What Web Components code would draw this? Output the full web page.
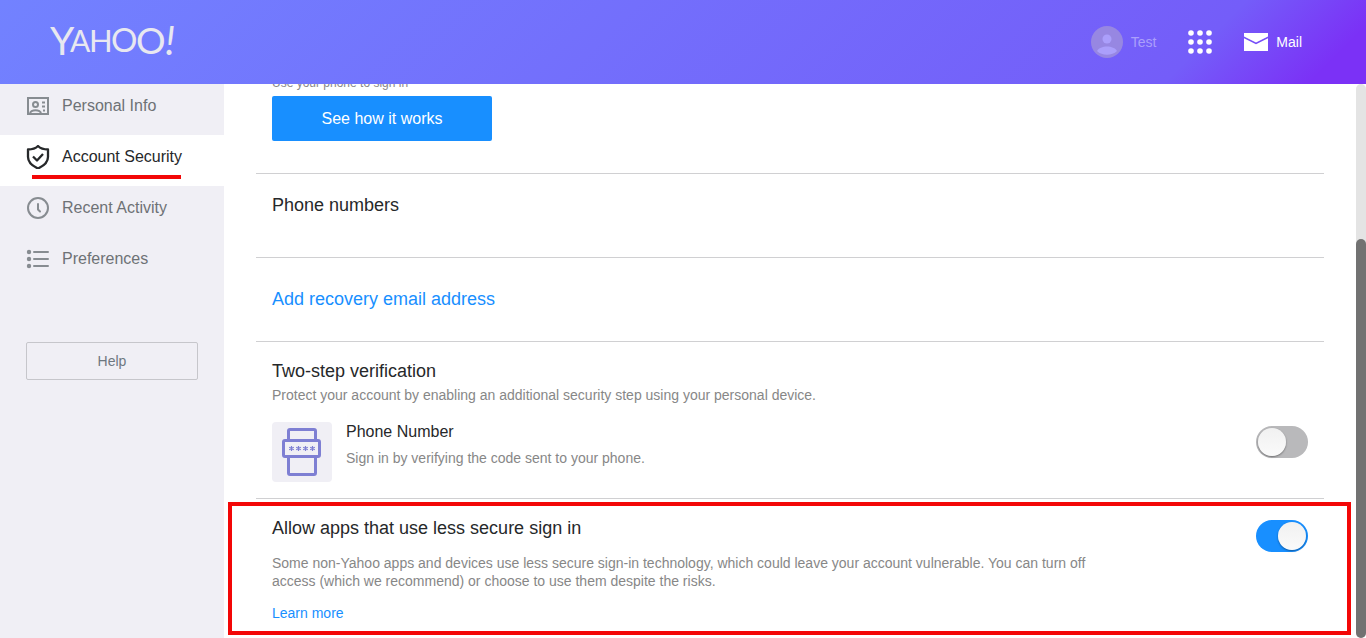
<!DOCTYPE html>
<html lang="en">
<head>
<meta charset="utf-8">
<title>Account Security</title>
<style>
  html, body { margin: 0; height: 100%; }
  body {
    font-family: "Liberation Sans", Arial, sans-serif;
    font-size: 14px;
    color: #26282a;
    background: #fff;
    overflow: hidden;
    --blue: #188fff;
    --muted: #878787;
    --panel: #f0eff5;
    --line: #d0d0d2;
    --mark: #f30707;
  }
</style>
</head>
<body>
<account-page>
  <top-bar slot="header" user="Test"></top-bar>
  <side-nav slot="nav">
    <nav-item icon="card">Personal Info</nav-item>
    <nav-item icon="shield" active>Account Security</nav-item>
    <nav-item icon="clock">Recent Activity</nav-item>
    <nav-item icon="list">Preferences</nav-item>
  </side-nav>
  <key-section>Use your phone to sign in</key-section>
  <plain-section>Phone numbers</plain-section>
  <plain-section link>Add recovery email address</plain-section>
  <verify-section></verify-section>
  <apps-section></apps-section>
</account-page>

<script>
const define = (name, render) => customElements.define(name, class extends HTMLElement {
  constructor() {
    super();
    this.attachShadow({ mode: 'open' });
  }
  connectedCallback() {
    const t = document.createElement('template');
    t.innerHTML = '<style>*{box-sizing:border-box}h2,h3,p{margin:0;font-weight:400}a{color:var(--blue);text-decoration:none}</style>' + render(this);
    this.shadowRoot.replaceChildren(t.content.cloneNode(true));
  }
});

/* Settings card shared styles */
const sectionCss = `
  :host { display: block; padding: 0 16px; border-bottom: 1px solid var(--line); }
  h2 { font-size: 18px; line-height: 24px; }
  p { font-size: 14px; line-height: 18px; color: var(--muted); }`;

const switchCss = `
  input {
    appearance: none; flex: none; margin: 4px 0 0; width: 52px; height: 32px;
    border-radius: 16px; background: #b9b9bb; display: flex; align-items: center; padding: 0 2px;
  }
  input::before {
    content: ""; width: 28px; height: 28px; border-radius: 50%;
    background: linear-gradient(#f1f1f1, #fafafa); box-shadow: 0 1px 2px rgba(0,0,0,.4);
  }
  input:checked { background: var(--blue); justify-content: flex-end; }`;

const icons = {
  card: `<g fill="none" stroke="#878c91" stroke-width="2"><path d="M2 4h20v16H2z"/><circle cx="9.500" cy="10.500" r="2.500"/><path d="M4 20c0-5 11-5 11 0M16 8.500h3M16 12.500h3M17 16.500h2"/></g>`,
  shield: `<g fill="none" stroke="#26282a" stroke-width="2.300" stroke-linejoin="round"><path d="M12 1C9.500 3.500 6 4.500 2 4.500V12c0 5 4.500 9 10 11.500C17.500 21 22 17 22 12V4.500C18 4.500 14.500 3.500 12 1z"/><path d="M7 11.500l4 4 6-6.500"/></g>`,
  clock: `<g fill="none" stroke="#878c91" stroke-width="2"><circle cx="12" cy="12" r="10"/><path d="M12 8v5.500l2 2" stroke-linecap="round" stroke-linejoin="round"/></g>`,
  list: `<g fill="#878c91"><circle cx="3" cy="5" r="2.200"/><circle cx="3" cy="12" r="2.200"/><circle cx="3" cy="19" r="2.200"/></g><path d="M8 5h14M8 12h14M8 19h14" stroke="#878c91" stroke-width="2" stroke-linecap="round"/>`
};

define('account-page', () => `
  <style>
    :host { display: flex; flex-direction: column; height: 100vh; }
    .body { flex: 1; min-height: 0; display: flex; }
    main { flex: 1; min-width: 0; overflow: hidden; }
    .scrolled { margin: -9px 32px 0; }
  </style>
  <slot name="header"></slot>
  <div class="body">
    <slot name="nav"></slot>
    <main><div class="scrolled"><slot></slot></div></main>
    <scroll-track></scroll-track>
  </div>`);

define('scroll-track', () => `
  <style>
    :host { display: flex; align-items: flex-end; flex: none; width: 10px; background: #e4e4e4; border-radius: 5px; }
    div { width: 100%; height: 72%; border-radius: 5px; background: #727272; }
  </style><div></div>`);

define('yahoo-logo', () => `
  <style>
    :host { display: block; }
    svg { display: block; }
    text { font-family: Lato, sans-serif; fill: #e8e8f0; }
  </style>
  <svg width="140" height="64" viewBox="0 0 140 64" role="img" aria-label="Yahoo!">
    <text><tspan x="0" y="45" font-size="39">Y</tspan><tspan x="20" y="42" font-size="30">A</tspan><tspan x="39" y="42" font-size="31">H</tspan><tspan x="61" y="42" font-size="33">O</tspan><tspan x="86" y="44" font-size="37">O</tspan><tspan x="115" y="45" font-size="40" font-style="italic">!</tspan></text>
  </svg>`);

define('top-bar', el => `
  <style>
    :host {
      display: flex; align-items: center; flex: none; height: 84px; padding: 0 64px 0 50px; gap: 32px;
      color: #fff; box-sizing: border-box;
      background: linear-gradient(135deg, #7282ff 0%, #745df9 86%, #7b31f6 96%);
    }
    yahoo-logo { margin-right: auto; }
    .item { display: flex; align-items: center; gap: 8px; color: inherit; }
    .user { color: #ab9ffb; }
    button { border: 0; padding: 0; background: none; font: inherit; }
    svg { display: block; }
  </style>
  <yahoo-logo></yahoo-logo>
  <button class="item user">
    <svg width="32" height="32" viewBox="0 0 32 32"><circle cx="16" cy="16" r="16" fill="#9787e2"/><circle cx="16" cy="13" r="4.500" fill="#ab9ffb"/><path d="M6 25c3-6 17-6 20 0-5 5-15 5-20 0z" fill="#ab9ffb"/></svg>
    ${el.getAttribute('user')}
  </button>
  <button aria-label="Apps">
    <svg width="24" height="24" viewBox="0 0 24 24" fill="#fff">${[3, 12, 21].map(y => [3, 12, 21].map(x => `<circle cx="${x}" cy="${y}" r="2.800"/>`).join('')).join('')}</svg>
  </button>
  <a class="item" href="#mail">
    <svg width="24" height="18" viewBox="0 0 24 18" fill="#fff"><path d="M0 0h24v3.500l-12 6L0 3.500z"/><path d="M0 5.300l12 6 12-6V18H0z"/></svg>
    Mail
  </a>`);

define('side-nav', () => `
  <style>
    :host { display: block; flex: none; width: 224px; background: var(--panel); }
    button {
      display: block; width: 172px; height: 38px; margin: 54px auto 0; border: 1px solid #c6c6cb;
      border-radius: 2px; background: none; font: inherit; color: #6e7780;
    }
  </style>
  <nav><slot></slot></nav>
  <button>Help</button>`);

define('nav-item', el => `
  <style>
    :host { display: block; position: relative; }
    :host([active]) { background: #fff; }
    a { display: flex; gap: 12px; padding: 10px 26px 17px; font-size: 16px; line-height: 24px; color: #6e7275; }
    :host([active]) a { color: #26282a; }
    :host([active])::after {
      content: ""; position: absolute; left: 32px; bottom: 7px; width: 149px; height: 4px; background: var(--mark);
    }
    svg { flex: none; }
  </style>
  <a href="#${el.getAttribute('icon')}"><svg width="24" height="24" viewBox="0 0 24 24">${icons[el.getAttribute('icon')]}</svg><slot></slot></a>`);

define('key-section', () => `
  <style>${sectionCss}
    :host { padding-bottom: 32px; }
    p { font-size: 12px; line-height: 16px; margin-bottom: 5px; }
    button {
      display: block; width: 220px; height: 45px; border: 0; border-radius: 2px;
      background: var(--blue); color: #fff; font: inherit; font-size: 16px;
    }
  </style>
  <p><slot></slot></p>
  <button>See how it works</button>`);

define('plain-section', el => `
  <style>${sectionCss}
    :host { padding-top: 19px; padding-bottom: 40px; }
    :host([link]) { padding-top: 29px; padding-bottom: 30px; }
  </style>
  <h2>${el.hasAttribute('link') ? '<a href="#recovery"><slot></slot></a>' : '<slot></slot>'}</h2>`);

define('verify-section', () => `
  <style>${sectionCss}${switchCss}
    :host { padding-top: 17px; padding-bottom: 16px; }
    h2 + p { margin-top: 3px; }
    .row { display: flex; gap: 14px; margin-top: 18px; }
    .text { flex: 1; }
    h3 { font-size: 16px; line-height: 20px; margin-bottom: 7px; }
    svg { flex: none; border-radius: 4px; background: var(--panel); }
  </style>
  <h2>Two-step verification</h2>
  <p>Protect your account by enabling an additional security step using your personal device.</p>
  <div class="row">
    <svg width="60" height="60" viewBox="0 0 60 60" fill="none" stroke="#7e7fd3" stroke-width="3">
      <rect x="16.500" y="7.500" width="27" height="45" rx="1.500"/>
      <rect x="11.500" y="18.500" width="36" height="16" rx="1.500" fill="#f0eff5"/>
      <path stroke-width="1.200" d="M19.500 24v5M17.200 25.200l4.600 2.600M17.200 27.800l4.600-2.600M26.500 24v5M24.200 25.200l4.600 2.600M24.200 27.800l4.600-2.600M33.500 24v5M31.200 25.200l4.600 2.600M31.200 27.800l4.600-2.600M40.500 24v5M38.200 25.200l4.600 2.600M38.200 27.800l4.600-2.600"/>
    </svg>
    <div class="text">
      <h3><label for="phone">Phone Number</label></h3>
      <p>Sign in by verifying the code sent to your phone.</p>
    </div>
    <input id="phone" type="checkbox" role="switch">
  </div>`);

define('apps-section', () => `
  <style>${sectionCss}${switchCss}
    :host { position: relative; padding-top: 17px; padding-bottom: 16px; border-bottom: 0; }
    :host::after {
      content: ""; position: absolute; inset: 3px -27px 3px -28px; border: 4px solid var(--mark); pointer-events: none;
    }
    .row { display: flex; justify-content: space-between; }
    .text { max-width: 832px; }
    p { margin: 14px 0; }
    a { display: block; line-height: 18px; }
  </style>
  <div class="row">
    <div class="text">
      <h2><label for="apps">Allow apps that use less secure sign in</label></h2>
      <p>Some non-Yahoo apps and devices use less secure sign-in technology, which could leave your account vulnerable. You can turn off access (which we recommend) or choose to use them despite the risks.</p>
      <a href="#learn">Learn more</a>
    </div>
    <input id="apps" type="checkbox" role="switch" checked>
  </div>`);
</script>
</body>
</html>
